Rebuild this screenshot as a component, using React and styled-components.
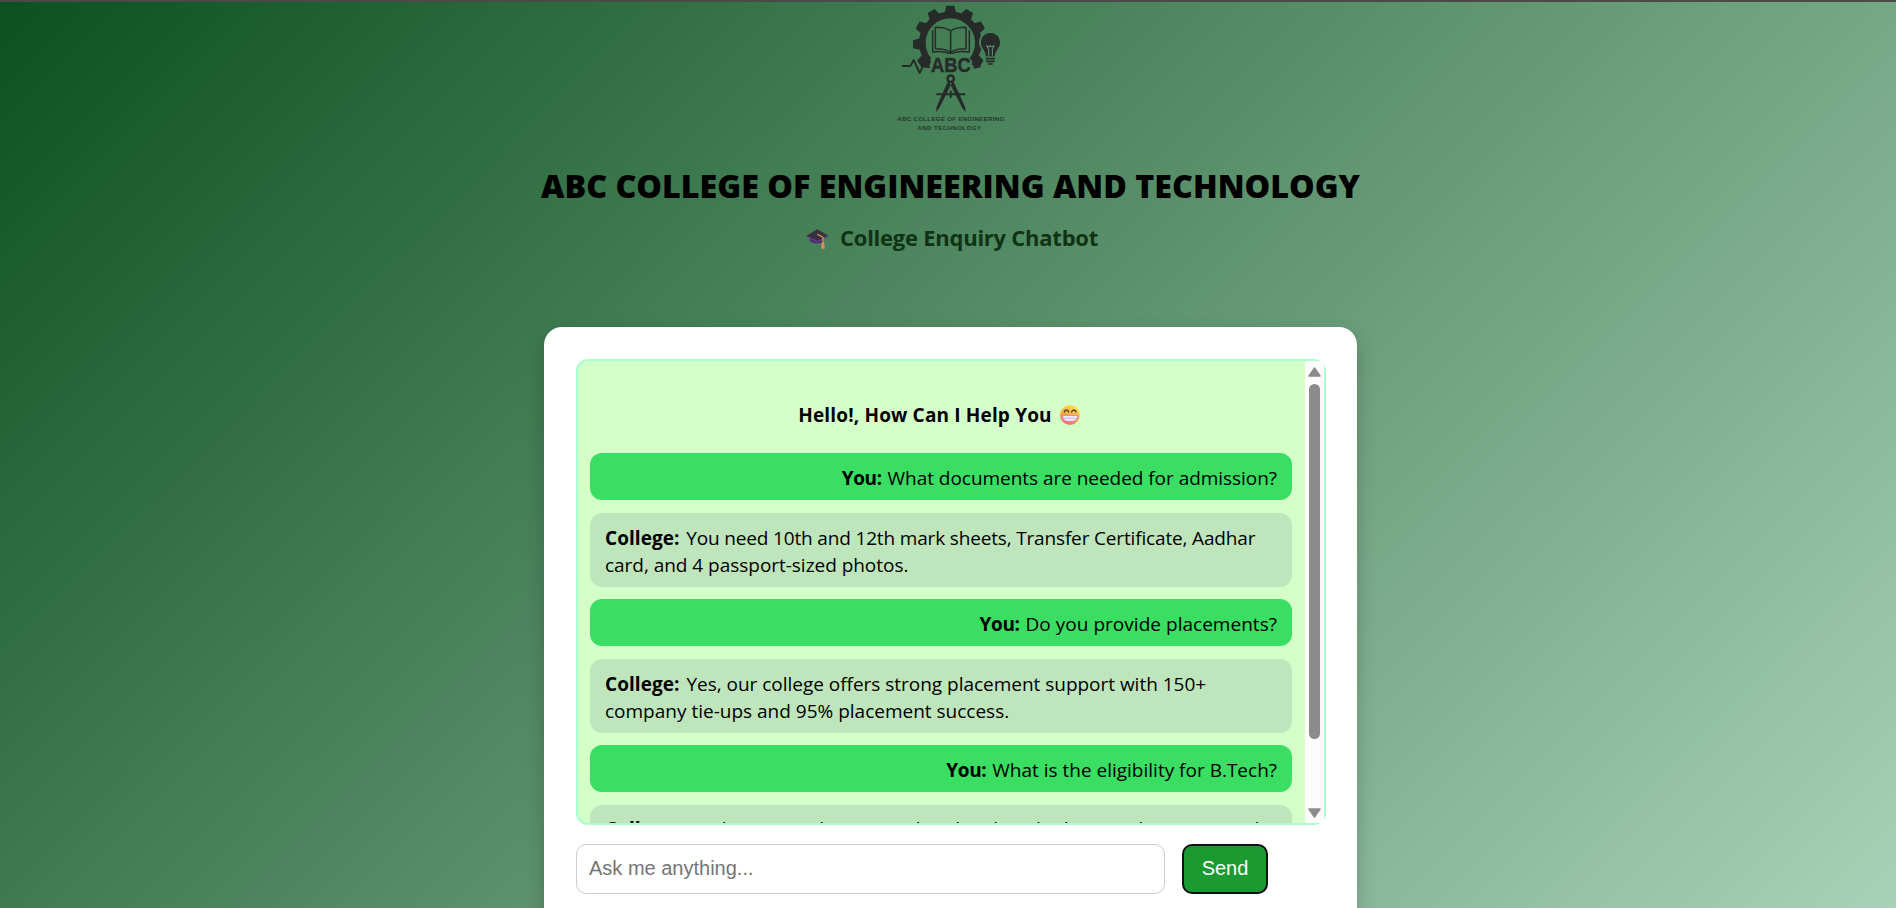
import React from 'react';
import styled, { createGlobalStyle } from 'styled-components';

const GlobalStyle = createGlobalStyle`
  *, *::before, *::after { box-sizing: border-box; }
  body { margin: 0; }
`;

const uiFont = '"Segoe UI", "Open Sans", "Noto Sans", sans-serif';
const formFont = '"Liberation Sans", Arial, sans-serif';
const ink = '#262b29';

const Page = styled.div`
  height: 908px;
  overflow: hidden;
  display: flex;
  flex-direction: column;
  align-items: center;
  padding-left: 5px;
  border-top: 2px solid #4a4a4a;
  background: linear-gradient(135deg, #0c511f, #a9d1b7) border-box;
  font-family: ${uiFont};
  color: #000;
`;

const LogoMark = styled.svg`
  flex: none;
  width: 141px;
  height: 133px;
`;

const Title = styled.h1`
  flex: none;
  margin: 29px 0 0;
  font-size: 32.25px;
  font-weight: 800;
  line-height: 44px;
  white-space: nowrap;
`;

const Subtitle = styled.h2`
  flex: none;
  display: flex;
  align-items: center;
  gap: 11px;
  margin: 14px 0 75px;
  padding-left: 3px;
  font-size: 22px;
  font-weight: 700;
  line-height: 30px;
  letter-spacing: -0.25px;
  color: #0f3314;
`;

const CapDrawing = styled.svg`
  width: 23px;
  height: 20px;
  margin-top: 4px;
`;

const Card = styled.main`
  flex: none;
  width: 813px;
  height: 640px;
  padding: 32px;
  border-radius: 18px;
  background: #fff;
  box-shadow: 0 8px 20px rgba(0, 0, 0, 0.2);
`;

const ChatBox = styled.section`
  display: flex;
  width: 750px;
  height: 466px;
  border: 2px solid #a8ffcf;
  border-radius: 12px;
  background: #d5ffc8;
`;

const Messages = styled.div`
  flex: 1;
  min-width: 0;
  overflow: hidden;
  padding: 0 13px 0 12px;
`;

const Greeting = styled.p`
  display: flex;
  align-items: center;
  justify-content: center;
  gap: 8px;
  margin: 41px 0 24px;
  padding-right: 4px;
  font-size: 19px;
  font-weight: 700;
  line-height: 27px;
  letter-spacing: 0.16px;
`;

const FaceDrawing = styled.svg`
  width: 20px;
  height: 20px;
  margin-top: -2px;
`;

const Bubble = styled.div`
  padding: 12px 15px 8px;
  margin-bottom: ${p => (p.$mine ? 13 : 12)}px;
  border-radius: 12px;
  background: ${p => (p.$mine ? '#39de62' : '#bfe5bc')};
  text-align: ${p => (p.$mine ? 'right' : 'left')};
  font-size: 19px;
  line-height: 27px;
  &:last-child { padding: 11px 15px 9px; }
`;

const Line = styled.div`
  white-space: nowrap;
  letter-spacing: ${p => p.$tracking || 0}px;
`;

const Sender = styled.strong`
  font-weight: 700;
  margin-right: ${p => (p.$mine ? 1 : 2)}px;
  letter-spacing: ${p => (p.$mine ? -0.4 : 0.05)}px;
`;

const ScrollTrack = styled.div`
  display: flex;
  flex-direction: column;
  align-items: center;
  width: 19px;
  padding: 6px 0 5px;
  background: #fcfcfc;
`;

const ScrollArrow = styled.svg`
  flex: none;
  width: 13px;
  height: 10px;
  transform: ${p => (p.$down ? 'rotate(180deg)' : 'none')};
`;

const ScrollRail = styled.div`
  flex: 1;
  padding-top: 7px;
`;

const ScrollThumb = styled.div`
  width: 11px;
  height: 355px;
  border-radius: 6px;
  background: #8b8b8b;
`;

const Composer = styled.form`
  display: flex;
  gap: 17px;
  margin-top: 19px;
`;

const QuestionInput = styled.input`
  width: 589px;
  height: 50px;
  padding: 0 12px 2px;
  border: 1px solid #ccc;
  border-radius: 10px;
  background: #fff;
  font: 20px ${formFont};
  &::placeholder { color: #757575; }
`;

const SendButton = styled.button`
  width: 86px;
  height: 50px;
  padding: 0 0 2px;
  border: 2px solid #111;
  border-radius: 10px;
  background: #1a9a30;
  color: #fff;
  font: 20px ${formFont};
`;

const conversation = [
  { mine: true, lines: [['What documents are needed for admission?', -0.04]] },
  {
    lines: [
      ['You need 10th and 12th mark sheets, Transfer Certificate, Aadhar', -0.16],
      ['card, and 4 passport-sized photos.', -0.03],
    ],
  },
  { mine: true, lines: [['Do you provide placements?', 0.03]] },
  {
    lines: [
      ['Yes, our college offers strong placement support with 150+', -0.02],
      ['company tie-ups and 95% placement success.'],
    ],
  },
  { mine: true, lines: [['What is the eligibility for B.Tech?']] },
  {
    lines: [
      ['Students must have completed 12th with Physics, Chemistry, and', -0.05],
      ['Mathematics.'],
    ],
  },
];

const toothAngles = [-124, -92, -61, -31, 0, 31, 61, 92, 124];

function CollegeLogo() {
  return (
    <LogoMark viewBox="0 6 423 399" fill="none">
      <defs>
        <mask id="bulbGap" maskUnits="userSpaceOnUse" x="0" y="0" width="423" height="405">
          <rect width="423" height="405" fill="#fff" />
          <circle cx="331" cy="127" r="34" fill="#000" />
          <rect x="313" y="140" width="40" height="58" fill="#000" />
        </mask>
      </defs>
      <g mask="url(#bulbGap)">
        <path d="M146 182A84 84 0 1 1 276 182" stroke={ink} strokeWidth="20" />
        {toothAngles.map(a => (
          <path key={a} transform={`translate(211 129) rotate(${a})`} d="M-12-112H12L18-88H-18Z" fill={ink} />
        ))}
        <path d="M120 184L142 170L153 184L146 204L126 202ZM304 184L282 170L276 184L282 206L301 202Z" fill={ink} />
      </g>
      <g stroke={ink} strokeWidth="4.500" strokeLinejoin="round">
        <path d="M212 93C201 84 184 82 166 82V146C184 146 201 148 212 157C223 148 240 146 258 146V82C240 82 223 84 212 93ZV157" />
        <path d="M158 91V156C178 153 196 155 207 160H217C228 155 246 153 268 156V91" />
      </g>
      <text x="153" y="215" fontFamily="Liberation Sans, Arial, sans-serif" fontWeight="700" fontSize="60" textLength="119" lengthAdjust="spacingAndGlyphs" fill={ink} stroke={ink} strokeWidth="1.500">ABC</text>
      <path d="M66 198H91L101 180L119 219L130 196L150 202" stroke={ink} strokeWidth="5.500" strokeLinejoin="round" />
      <circle cx="212" cy="236" r="9.500" stroke={ink} strokeWidth="7" />
      <path d="M203 245L215 250L178 324L168 336L170 320ZM221 245L209 250L247 324L257 336L255 320Z" fill={ink} />
      <path d="M169 283H256M212 272V294" stroke={ink} strokeWidth="6" />
      <path d="M331 99C313 99 303 112 303 128C303 145 317 151 318 169H344C345 151 360 145 360 128C360 112 349 99 331 99Z" fill={ink} />
      <path d="M326 167V149L320 137L328 141L331 136L334 141L342 137L337 149V167" stroke="#6f9a7c" strokeWidth="3" />
      <path d="M317 176H345M318 184H344M324 192H338" stroke={ink} strokeWidth="5" />
      <g fill="#28382f" fontFamily="Liberation Sans, Arial, sans-serif" fontWeight="700" fontSize="18.500">
        <text x="52" y="364" textLength="321">ABC COLLEGE OF ENGINEERING</text>
        <text x="112" y="389" textLength="191">AND TECHNOLOGY</text>
      </g>
    </LogoMark>
  );
}

function GraduationCap() {
  return (
    <CapDrawing viewBox="0 0 69 60">
      <path d="M11 22V36C19 45 44 46 54 36V22Z" fill="#4b2b6e" />
      <path d="M1 20L34 1L67 20L34 36Z" fill="#37303f" />
      <path d="M1 20L34 36L67 20V23L34 40L1 23Z" fill="#6b4390" />
      <path d="M34 16L51 25V45" fill="none" stroke="#f0a63a" strokeWidth="3.500" />
      <path d="M47 43H55L56 59H46Z" fill="#f58a5c" />
    </CapDrawing>
  );
}

function GrinningFace() {
  return (
    <FaceDrawing viewBox="0 0 60 60">
      <defs>
        <linearGradient id="skin" x1="0.800" y1="0" x2="0.350" y2="1">
          <stop offset="0" stopColor="#ffe45c" />
          <stop offset="0.600" stopColor="#f9ac38" />
          <stop offset="1" stopColor="#ee6c6c" />
        </linearGradient>
      </defs>
      <circle cx="30" cy="30" r="30" fill="url(#skin)" />
      <path d="M13 21C15 13 24 13 26 21M35 21C37 13 46 13 48 21" fill="none" stroke="#50352e" strokeWidth="4" strokeLinecap="round" />
      <path d="M8 31H53V38C53 54 8 54 8 38Z" fill="#f3e6ff" stroke="#c04fc4" strokeWidth="2" />
      <path d="M10 40H51" stroke="#c99be0" strokeWidth="2" />
    </FaceDrawing>
  );
}

function Arrow({ down }) {
  return (
    <ScrollArrow $down={down} viewBox="0 0 13 10">
      <path d="M6.500 1L12 9H1Z" fill="#8b8b8b" stroke="#8b8b8b" strokeWidth="1.500" strokeLinejoin="round" />
    </ScrollArrow>
  );
}

function Message({ mine, lines }) {
  return (
    <Bubble $mine={mine}>
      {lines.map(([text, tracking], i) => (
        <Line key={text} $tracking={tracking}>
          {i === 0 && <><Sender $mine={mine}>{mine ? 'You:' : 'College:'}</Sender>{' '}</>}
          {text}
        </Line>
      ))}
    </Bubble>
  );
}

export default function App() {
  return (
    <Page>
      <GlobalStyle />
      <CollegeLogo />
      <Title>ABC COLLEGE OF ENGINEERING AND TECHNOLOGY</Title>
      <Subtitle><GraduationCap />College Enquiry Chatbot</Subtitle>
      <Card>
        <ChatBox>
          <Messages>
            <Greeting>Hello!, How Can I Help You<GrinningFace /></Greeting>
            {conversation.map(m => <Message key={m.lines[0][0]} {...m} />)}
          </Messages>
          <ScrollTrack>
            <Arrow />
            <ScrollRail><ScrollThumb /></ScrollRail>
            <Arrow down />
          </ScrollTrack>
        </ChatBox>
        <Composer>
          <QuestionInput placeholder="Ask me anything..." />
          <SendButton type="button">Send</SendButton>
        </Composer>
      </Card>
    </Page>
  );
}
